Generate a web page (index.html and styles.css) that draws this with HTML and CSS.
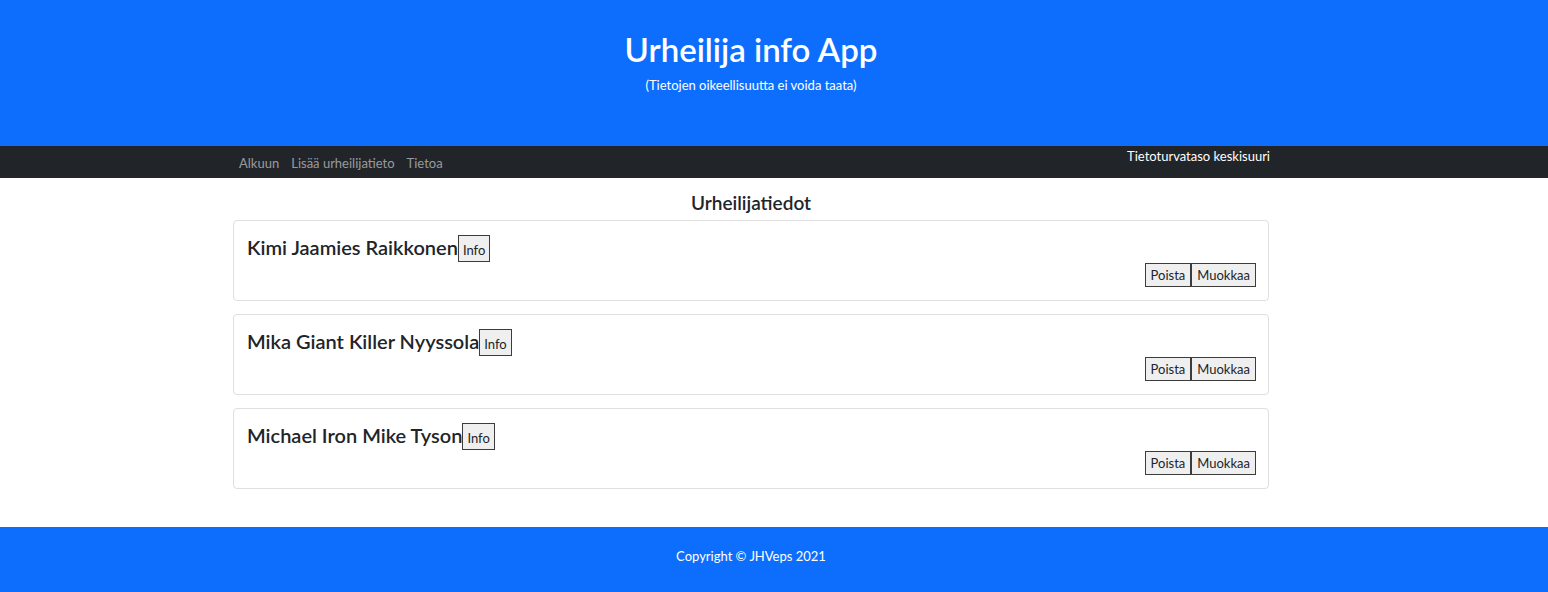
FILE: index.html
```html
<!DOCTYPE html>
<html lang="fi">
<head>
<meta charset="utf-8">
<title>Urheilija info App</title>
<link rel="stylesheet" href="styles.css">
</head>
<body>
<header class="hero">
  <div class="frame">
    <h1 class="hero-title">Urheilija info App</h1>
    <p class="hero-sub">(Tietojen oikeellisuutta ei voida taata)</p>
  </div>
</header>
<nav class="navbar">
  <div class="frame">
    <div class="container nav-inner">
      <ul class="nav-links">
        <li><a class="nav-link" href="#">Alkuun</a></li>
        <li><a class="nav-link" href="#">Lisää urheilijatieto</a></li>
        <li><a class="nav-link" href="#">Tietoa</a></li>
      </ul>
      <span class="nav-status">Tietoturvataso keskisuuri</span>
    </div>
  </div>
</nav>
<main class="frame">
  <div class="container">
    <h2 class="page-title">Urheilijatiedot</h2>
    <div class="card">
      <div class="name-row"><h5 class="name">Kimi Jaamies Raikkonen</h5><button class="btn-info">Info</button></div>
      <div class="actions"><button class="btn">Poista</button><button class="btn">Muokkaa</button></div>
    </div>
    <div class="card">
      <div class="name-row"><h5 class="name">Mika Giant Killer Nyyssola</h5><button class="btn-info">Info</button></div>
      <div class="actions"><button class="btn">Poista</button><button class="btn">Muokkaa</button></div>
    </div>
    <div class="card">
      <div class="name-row"><h5 class="name">Michael Iron Mike Tyson</h5><button class="btn-info">Info</button></div>
      <div class="actions"><button class="btn">Poista</button><button class="btn">Muokkaa</button></div>
    </div>
  </div>
</main>
<footer class="footer">
  <div class="frame">
    <p class="copy">Copyright © JHVeps 2021</p>
  </div>
</footer>
</body>
</html>
```

FILE: styles.css
```css
* { box-sizing: border-box; }
html, body { margin: 0; padding: 0; }
body {
  font-family: Lato, "Noto Sans", sans-serif;
  color: #212529;
  background: #fff;
  height: 592px;
  overflow: hidden;
}
.frame { width: 1502px; }
.container { width: 1036px; margin: 0 auto; }

.hero {
  background: #0d6efd;
  color: #fff;
  height: 146px;
  padding-top: 30px;
  text-align: center;
}
.hero-title {
  margin: 0;
  font-size: 33px;
  line-height: 38px;
  font-weight: 600;
}
.hero-sub {
  margin: 9px 0 0;
  font-size: 13px;
  line-height: 16px;
}

.navbar {
  background: #212529;
  height: 32px;
}
.nav-inner {
  display: flex;
  justify-content: space-between;
  align-items: flex-start;
  height: 32px;
}
.nav-links {
  list-style: none;
  margin: 0;
  padding: 7px 0 0;
  display: flex;
}
.nav-link {
  display: block;
  padding: 0 6px;
  font-size: 13px;
  line-height: 20px;
  color: rgba(255,255,255,.55);
  text-decoration: none;
}
.nav-status {
  color: #fff;
  font-size: 13px;
  line-height: 16px;
  padding-top: 2px;
  margin-right: -1px;
}

.page-title {
  margin: 13px 0 6px;
  text-align: center;
  font-size: 19px;
  line-height: 23px;
  font-weight: 600;
}

.card {
  border: 1px solid #dfdfdf;
  border-radius: 4px;
  padding: 14px 12px 13px 13px;
  margin-bottom: 13px;
  height: 81px;
}
.name-row {
  display: flex;
  align-items: baseline;
  height: 27px;
}
.name {
  margin: 0;
  font-size: 20px;
  line-height: 20px;
  font-weight: 600;
}
button {
  font-family: inherit;
  font-size: 13px;
  color: #212529;
  background: #efefef;
  border: 1px solid #3c3c3c;
  border-radius: 0;
  margin: 0;
}
.btn-info {
  display: inline-block;
  height: 27px;
  min-height: 27px;
  padding: 7px 4px 3px;
  line-height: 15px;
}
.actions {
  display: flex;
  justify-content: flex-end;
  margin-top: 1px;
}
.btn {
  height: 24px;
  padding: 3px 5px;
  line-height: 16px;
}

.footer {
  background: #0d6efd;
  color: #fff;
  margin-top: 38px;
  height: 65px;
  padding-top: 21px;
  text-align: center;
}
.copy {
  margin: 0;
  font-size: 13px;
  line-height: 16px;
}
```
